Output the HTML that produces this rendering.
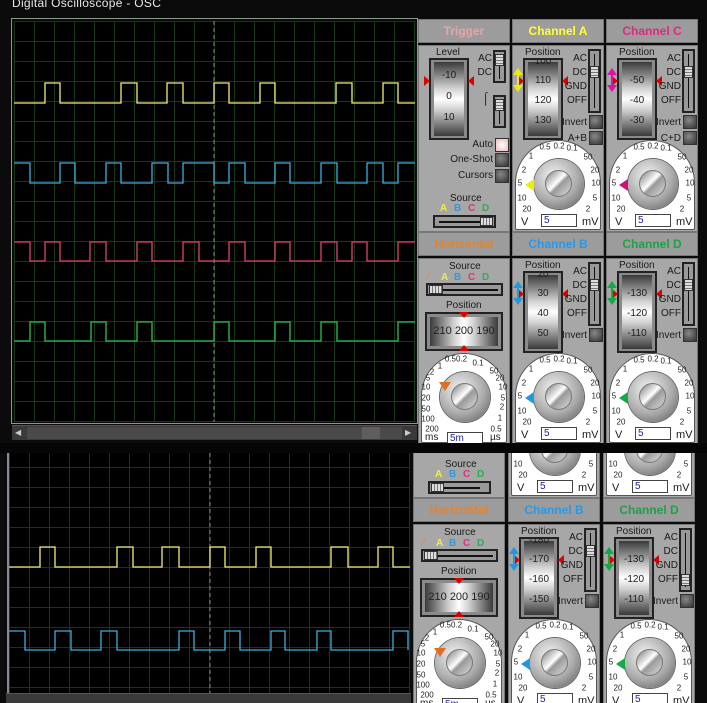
<!DOCTYPE html>
<html><head><meta charset="utf-8"><style>
*{margin:0;padding:0;box-sizing:border-box}
body{width:707px;height:703px;background:#0b0b0b;position:relative;overflow:hidden;font-family:"Liberation Sans",sans-serif;}
.abs{position:absolute}
.title{position:absolute;left:12px;top:-4px;color:#e8e8e8;font-size:12px;letter-spacing:.3px}
.scr{position:absolute;background-color:#000;
 background-image:linear-gradient(90deg,#173717 1px,transparent 1px),linear-gradient(#173717 1px,transparent 1px);
 background-size:20px 20px}
.frame{position:absolute;border:1px solid #8a9a8a}
.sb{position:absolute;background:#3a3a3a;border-top:1px solid #555}
.grp{position:absolute;overflow:hidden}
.col{position:absolute;width:92px;height:213px}
.hd{position:absolute;left:0;top:0;width:92px;height:24px;background:#9c9c9c;border:1px solid #777;text-align:center;font-weight:bold;font-size:12px;line-height:22px}
.bd{position:absolute;left:0;top:26px;width:92px;height:187px;background:#a7a7a7;border:1px solid #777}
.l{position:absolute;font-size:10px;color:#1a1a1a;white-space:nowrap;font-family:"Liberation Sans Narrow","Liberation Sans",sans-serif}
.r{left:auto!important;right:17px;text-align:right}
.drum{position:absolute;background:#8a8a8a;border:2px solid #222;overflow:hidden}
.cyl{position:absolute;left:3px;top:2px;right:3px;bottom:2px;background:linear-gradient(#3a3a3a,#cfcfcf 35%,#fff 50%,#cfcfcf 65%,#3a3a3a)}
.cylh{position:absolute;left:3px;top:3px;right:3px;bottom:3px;background:linear-gradient(90deg,#3a3a3a,#cfcfcf 35%,#fff 50%,#cfcfcf 65%,#3a3a3a)}
.dn{position:absolute;width:100%;text-align:center;font-size:10px;color:#222;font-family:"Liberation Sans Narrow","Liberation Sans",sans-serif}
.trk{position:absolute;background:#999;border:2px solid #222}
.trk i{position:absolute;background:#111}
.th{position:absolute;background:repeating-linear-gradient(#ddd 0 2px,#777 2px 3px);border:1px solid #333}
.thh{position:absolute;background:repeating-linear-gradient(90deg,#ddd 0 2px,#777 2px 3px);border:1px solid #333}
.btn{position:absolute;width:14px;height:14px;border:1px solid #333;background:radial-gradient(circle at 40% 35%,#888,#333)}
.dial{position:absolute;left:3px;top:121px;width:86px;height:90px;background:#fff;border:1px solid #555;border-radius:43px 43px 2px 2px}
.knob{position:absolute;left:22px;top:140px;width:50px;height:50px;border-radius:50%;background:radial-gradient(circle at 40% 35%,#f4f4f4,#aaa 55%,#555);box-shadow:0 0 0 1px #666}
.knob i{position:absolute;left:11px;top:11px;width:27px;height:27px;border-radius:50%;background:linear-gradient(135deg,#777,#fff 45%,#999 55%,#ddd);border:1px solid #777}
.s{position:absolute;font-size:8px;color:#222;transform:translate(-50%,-50%)}
.inp{position:absolute;left:29px;top:195px;width:36px;height:13px;background:#fff;border:1px solid #444;font-size:10px;color:#229;padding-left:2px;line-height:11px}
.ra{position:absolute;width:0;height:0;border-top:5px solid transparent;border-bottom:5px solid transparent}
.ua{position:absolute;width:0;height:0;border-left:5px solid transparent;border-right:5px solid transparent}
.dbl{position:absolute;left:1px;top:49px;width:10px;height:24px}
.src{position:absolute;font-size:10px;font-weight:bold}
</style></head><body>
<div class="title">Digital Oscilloscope - OSC</div>

<div class="frame" style="left:11px;top:18px;width:407px;height:406px"></div>
<div class="scr" style="left:14px;top:21px;width:401px;height:401px"></div>
<div class="sb" style="left:12px;top:425px;width:405px;height:15px"></div>
<div class="abs" style="left:27px;top:427px;width:375px;height:12px;background:#4a4a4a"></div>
<div class="abs" style="left:362px;top:427px;width:18px;height:12px;background:#5e5e5e"></div>
<div class="abs" style="left:15px;top:428px;color:#ccc;font-size:8px">◀</div>
<div class="abs" style="left:405px;top:428px;color:#ccc;font-size:8px">▶</div>

<div class="abs" style="left:0;top:443px;width:707px;height:10px;background:#050505"></div>

<div class="scr" style="left:8px;top:453px;width:402px;height:240px;background-position:1px 14px"></div>
<div class="abs" style="left:7px;top:453px;width:2px;height:240px;background:#889"></div>
<div class="sb" style="left:6px;top:693px;width:405px;height:10px"></div>

<svg class="abs" style="left:0;top:0" width="707" height="703">
<line x1="214" y1="21" x2="214" y2="422" stroke="#888" stroke-dasharray="4,3"/>
<line x1="210" y1="453" x2="210" y2="693" stroke="#888" stroke-dasharray="4,3"/>
<g fill="none" stroke-width="1.3">
<polyline stroke="#f4f070" points="14,103 45,103 45,83 60,83 60,103 121,103 121,83 137,83 137,103 167,103 167,83 183,83 183,103 214,103 214,83 229,83 229,103 260,103 260,83 275,83 275,103 336,103 336,83 352,83 352,103 383,103 383,83 398,83 398,103 415,103"/>
<polyline stroke="#3ab0e0" points="14,163 30,163 30,183 60,183 60,163 75,163 75,183 106,183 106,163 121,163 121,183 152,183 152,163 168,163 168,183 183,183 183,163 214,163 214,183 229,183 229,163 245,163 245,183 275,183 275,163 290,163 290,183 321,183 321,163 337,163 337,183 367,183 367,163 383,163 383,183 398,183 398,163 415,163"/>
<polyline stroke="#e04070" points="14,242 30,242 30,261 45,261 45,242 60,242 60,261 90,261 90,242 106,242 106,261 137,261 137,242 152,242 152,261 183,261 183,242 199,242 199,261 229,261 229,242 245,242 245,261 275,261 275,242 290,242 290,261 321,261 321,242 337,242 337,261 352,261 352,242 367,242 367,261 398,261 398,242 415,242"/>
<polyline stroke="#30c050" points="14,341 30,341 30,322 45,322 45,341 91,341 91,322 106,322 106,341 137,341 137,322 152,322 152,341 214,341 214,322 229,322 229,341 275,341 275,322 290,322 290,341 321,341 321,322 337,322 337,341 398,341 398,322 415,322"/>
<polyline stroke="#f4f070" points="9,567 40,567 40,547 55,547 55,567 117,567 117,547 133,547 133,567 162,567 162,547 179,547 179,567 210,567 210,547 225,547 225,567 256,567 256,547 271,547 271,567 331,567 331,547 348,547 348,567 378,567 378,547 393,547 393,567 410,567"/>
<polyline stroke="#3ab0e0" points="9,631 25,631 25,650 55,650 55,631 71,631 71,650 101,650 101,631 117,631 117,650 179,650 179,631 194,631 194,650 225,650 225,631 240,631 240,650 271,650 271,631 285,631 285,650 317,650 317,631 331,631 331,650 393,650 393,631 408,631 408,650"/>
</g></svg>

<!-- ===== TOP GROUP ===== -->
<div class="grp" style="left:418px;top:18px;width:289px;height:425px">
<div class="abs" style="left:0;top:1px;width:282px;height:430px">

<div class="col" style="left:0;top:0">
<div class="hd" style="color:#e8a4a4">Trigger</div><div class="bd"></div>
<div class="l" style="left:18px;top:28px">Level</div>
<div class="drum" style="left:11px;top:39px;width:40px;height:82px"><div class="cyl"></div>
<div class="dn" style="top:10px">-10</div><div class="dn" style="top:31px">0</div><div class="dn" style="top:52px">10</div></div>
<div class="ra" style="left:6px;top:57px;border-left:6px solid #d00"></div>
<div class="ra" style="left:50px;top:57px;border-right:6px solid #d00"></div>
<div class="l r" style="top:34px;right:18px">AC</div><div class="l r" style="top:48px;right:18px">DC</div>
<div class="trk" style="left:75px;top:31px;width:13px;height:33px"><i style="left:4px;top:3px;width:1px;height:24px"></i><div class="th" style="left:0;top:2px;width:9px;height:12px"></div></div>
<div class="l" style="left:64px;top:72px;font-size:12px">⌠</div>
<div class="trk" style="left:75px;top:76px;width:13px;height:33px"><i style="left:4px;top:3px;width:1px;height:24px"></i><div class="th" style="left:0;top:2px;width:9px;height:12px"></div></div>
<div class="l r" style="top:120px">Auto</div><div class="btn" style="left:77px;top:119px;background:radial-gradient(#fff,#f0b8b8)"></div>
<div class="l r" style="top:135px">One-Shot</div><div class="btn" style="left:77px;top:134px"></div>
<div class="l r" style="top:151px">Cursors</div><div class="btn" style="left:77px;top:150px"></div>
<div class="l" style="left:32px;top:174px">Source</div>
<div class="src" style="left:22px;top:184px;color:#ee4">A</div><div class="src" style="left:36px;top:184px;color:#39d">B</div><div class="src" style="left:50px;top:184px;color:#d37">C</div><div class="src" style="left:64px;top:184px;color:#3a5">D</div>
<div class="trk" style="left:15px;top:196px;width:63px;height:13px"><i style="left:4px;top:4px;width:46px;height:2px"></i><div class="thh" style="left:45px;top:0;width:13px;height:9px"></div></div>
</div>

<div class="col" style="left:94px;top:0">
<div class="hd" style="color:#ff3">Channel A</div><div class="bd"></div>
<div class="l" style="left:13px;top:28px">Position</div>
<div class="drum" style="left:11px;top:39px;width:40px;height:82px"><div class="cyl"></div>
<div class="dn" style="top:-4px">100</div><div class="dn" style="top:15px">110</div><div class="dn" style="top:35px">120</div><div class="dn" style="top:55px">130</div></div>
<div class="ra" style="left:6px;top:57px;border-left:6px solid #d00"></div>
<div class="ra" style="left:50px;top:57px;border-right:6px solid #d00"></div>
<div class="dbl"><div class="ua" style="top:0;border-bottom:7px solid #ee0"></div><div class="abs" style="left:4px;top:6px;width:2px;height:12px;background:#ee0"></div><div class="ua" style="top:17px;border-top:7px solid #ee0"></div></div>
<div class="l r" style="top:34px">AC</div><div class="l r" style="top:48px">DC</div><div class="l r" style="top:62px">GND</div><div class="l r" style="top:76px">OFF</div>
<div class="trk" style="left:76px;top:30px;width:13px;height:64px"><i style="left:4px;top:3px;width:1px;height:54px"></i><div class="th" style="left:0;top:15px;width:9px;height:12px"></div></div>
<div class="l r" style="top:98px">Invert</div><div class="btn" style="left:77px;top:96px"></div>
<div class="l r" style="top:114px">A+B</div><div class="btn" style="left:77px;top:112px"></div>
<div class="dial"></div>
<span class="s" style="left:33px;top:128px">0.5</span><span class="s" style="left:47px;top:127px">0.2</span><span class="s" style="left:60px;top:129px">0.1</span>
<span class="s" style="left:19px;top:137px">1</span><span class="s" style="left:12px;top:151px">2</span><span class="s" style="left:8px;top:164px">5</span><span class="s" style="left:10px;top:179px">10</span><span class="s" style="left:15px;top:190px">20</span>
<span class="s" style="left:76px;top:138px">50</span><span class="s" style="left:83px;top:151px">20</span><span class="s" style="left:84px;top:164px">10</span><span class="s" style="left:83px;top:179px">5</span><span class="s" style="left:76px;top:190px">2</span>
<div class="knob"><i></i></div>
<div class="ra" style="left:13px;top:160px;border-right:9px solid #ee0;border-top-width:6px;border-bottom-width:6px"></div>
<div class="l" style="left:9px;top:197px;font-size:11px">V</div><div class="inp">5</div><div class="l" style="left:70px;top:197px;font-size:11px">mV</div>
</div>

<div class="col" style="left:188px;top:0">
<div class="hd" style="color:#e02880">Channel C</div><div class="bd"></div>
<div class="l" style="left:13px;top:28px">Position</div>
<div class="drum" style="left:11px;top:39px;width:40px;height:82px"><div class="cyl"></div>
<div class="dn" style="top:15px">-50</div><div class="dn" style="top:35px">-40</div><div class="dn" style="top:55px">-30</div></div>
<div class="ra" style="left:6px;top:57px;border-left:6px solid #d00"></div>
<div class="ra" style="left:50px;top:57px;border-right:6px solid #d00"></div>
<div class="dbl"><div class="ua" style="top:0;border-bottom:7px solid #d1a"></div><div class="abs" style="left:4px;top:6px;width:2px;height:12px;background:#d1a"></div><div class="ua" style="top:17px;border-top:7px solid #d1a"></div></div>
<div class="l r" style="top:34px">AC</div><div class="l r" style="top:48px">DC</div><div class="l r" style="top:62px">GND</div><div class="l r" style="top:76px">OFF</div>
<div class="trk" style="left:76px;top:30px;width:13px;height:64px"><i style="left:4px;top:3px;width:1px;height:54px"></i><div class="th" style="left:0;top:15px;width:9px;height:12px"></div></div>
<div class="l r" style="top:98px">Invert</div><div class="btn" style="left:77px;top:96px"></div>
<div class="l r" style="top:114px">C+D</div><div class="btn" style="left:77px;top:112px"></div>
<div class="dial"></div>
<span class="s" style="left:33px;top:128px">0.5</span><span class="s" style="left:47px;top:127px">0.2</span><span class="s" style="left:60px;top:129px">0.1</span>
<span class="s" style="left:19px;top:137px">1</span><span class="s" style="left:12px;top:151px">2</span><span class="s" style="left:8px;top:164px">5</span><span class="s" style="left:10px;top:179px">10</span><span class="s" style="left:15px;top:190px">20</span>
<span class="s" style="left:76px;top:138px">50</span><span class="s" style="left:83px;top:151px">20</span><span class="s" style="left:84px;top:164px">10</span><span class="s" style="left:83px;top:179px">5</span><span class="s" style="left:76px;top:190px">2</span>
<div class="knob"><i></i></div>
<div class="ra" style="left:13px;top:160px;border-right:9px solid #c17;border-top-width:6px;border-bottom-width:6px"></div>
<div class="l" style="left:9px;top:197px;font-size:11px">V</div><div class="inp">5</div><div class="l" style="left:70px;top:197px;font-size:11px">mV</div>
</div>

<div class="col" style="left:0;top:213px">
<div class="hd" style="color:#e8822a">Horizontal</div><div class="bd"></div>
<div class="l" style="left:31px;top:29px">Source</div>
<div class="l" style="left:10px;top:39px;color:#d83">⁄</div>
<div class="src" style="left:23px;top:40px;color:#ee4">A</div><div class="src" style="left:36px;top:40px;color:#39d">B</div><div class="src" style="left:50px;top:40px;color:#d37">C</div><div class="src" style="left:64px;top:40px;color:#3a5">D</div>
<div class="trk" style="left:8px;top:51px;width:77px;height:13px"><i style="left:4px;top:4px;width:66px;height:2px"></i><div class="thh" style="left:1px;top:0;width:14px;height:9px"></div></div>
<div class="l" style="left:28px;top:68px">Position</div>
<div class="drum" style="left:7px;top:80px;width:78px;height:39px"><div class="cylh"></div>
<div class="dn" style="top:11px;font-size:11px">210 200 190</div></div>
<div class="ua" style="left:41px;top:80px;border-top:6px solid #d00"></div>
<div class="ua" style="left:41px;top:113px;border-bottom:6px solid #d00"></div>
<div class="dial"></div>
<span class="s" style="left:38px;top:127px">0.50.2</span><span class="s" style="left:60px;top:131px">0.1</span>
<span class="s" style="left:22px;top:134px">1</span><span class="s" style="left:14px;top:140px">2</span><span class="s" style="left:10px;top:146px">5</span><span class="s" style="left:8px;top:155px">10</span><span class="s" style="left:8px;top:166px">20</span><span class="s" style="left:8px;top:177px">50</span><span class="s" style="left:10px;top:187px">100</span><span class="s" style="left:14px;top:197px">200</span>
<span class="s" style="left:76px;top:139px">50</span><span class="s" style="left:82px;top:146px">20</span><span class="s" style="left:85px;top:155px">10</span><span class="s" style="left:85px;top:166px">5</span><span class="s" style="left:84px;top:175px">2</span><span class="s" style="left:82px;top:186px">1</span><span class="s" style="left:78px;top:197px">0.5</span>
<div class="knob"><i></i></div>
<div class="ua" style="left:21px;top:150px;border-top:9px solid #e07020;border-left-width:6px;border-right-width:6px"></div>
<div class="l" style="left:7px;top:200px">ms</div><div class="inp" style="top:200px;height:12px">5m</div><div class="l" style="left:72px;top:200px">µs</div>
</div>

<div class="col" style="left:94px;top:213px">
<div class="hd" style="color:#2a98e8">Channel B</div><div class="bd"></div>
<div class="l" style="left:13px;top:28px">Position</div>
<div class="drum" style="left:11px;top:39px;width:40px;height:82px"><div class="cyl"></div>
<div class="dn" style="top:-4px">20</div><div class="dn" style="top:15px">30</div><div class="dn" style="top:35px">40</div><div class="dn" style="top:55px">50</div></div>
<div class="ra" style="left:6px;top:57px;border-left:6px solid #d00"></div>
<div class="ra" style="left:50px;top:57px;border-right:6px solid #d00"></div>
<div class="dbl"><div class="ua" style="top:0;border-bottom:7px solid #29d"></div><div class="abs" style="left:4px;top:6px;width:2px;height:12px;background:#29d"></div><div class="ua" style="top:17px;border-top:7px solid #29d"></div></div>
<div class="l r" style="top:34px">AC</div><div class="l r" style="top:48px">DC</div><div class="l r" style="top:62px">GND</div><div class="l r" style="top:76px">OFF</div>
<div class="trk" style="left:76px;top:30px;width:13px;height:64px"><i style="left:4px;top:3px;width:1px;height:54px"></i><div class="th" style="left:0;top:15px;width:9px;height:12px"></div></div>
<div class="l r" style="top:98px">Invert</div><div class="btn" style="left:77px;top:96px"></div>
<div class="dial"></div>
<span class="s" style="left:33px;top:128px">0.5</span><span class="s" style="left:47px;top:127px">0.2</span><span class="s" style="left:60px;top:129px">0.1</span>
<span class="s" style="left:19px;top:137px">1</span><span class="s" style="left:12px;top:151px">2</span><span class="s" style="left:8px;top:164px">5</span><span class="s" style="left:10px;top:179px">10</span><span class="s" style="left:15px;top:190px">20</span>
<span class="s" style="left:76px;top:138px">50</span><span class="s" style="left:83px;top:151px">20</span><span class="s" style="left:84px;top:164px">10</span><span class="s" style="left:83px;top:179px">5</span><span class="s" style="left:76px;top:190px">2</span>
<div class="knob"><i></i></div>
<div class="ra" style="left:13px;top:160px;border-right:9px solid #29d;border-top-width:6px;border-bottom-width:6px"></div>
<div class="l" style="left:9px;top:197px;font-size:11px">V</div><div class="inp">5</div><div class="l" style="left:70px;top:197px;font-size:11px">mV</div>
</div>

<div class="col" style="left:188px;top:213px">
<div class="hd" style="color:#20a048">Channel D</div><div class="bd"></div>
<div class="l" style="left:13px;top:28px">Position</div>
<div class="drum" style="left:11px;top:39px;width:40px;height:82px"><div class="cyl"></div>
<div class="dn" style="top:15px">-130</div><div class="dn" style="top:35px">-120</div><div class="dn" style="top:55px">-110</div></div>
<div class="ra" style="left:6px;top:57px;border-left:6px solid #d00"></div>
<div class="ra" style="left:50px;top:57px;border-right:6px solid #d00"></div>
<div class="dbl"><div class="ua" style="top:0;border-bottom:7px solid #1a4"></div><div class="abs" style="left:4px;top:6px;width:2px;height:12px;background:#1a4"></div><div class="ua" style="top:17px;border-top:7px solid #1a4"></div></div>
<div class="l r" style="top:34px">AC</div><div class="l r" style="top:48px">DC</div><div class="l r" style="top:62px">GND</div><div class="l r" style="top:76px">OFF</div>
<div class="trk" style="left:76px;top:30px;width:13px;height:64px"><i style="left:4px;top:3px;width:1px;height:54px"></i><div class="th" style="left:0;top:15px;width:9px;height:12px"></div></div>
<div class="l r" style="top:98px">Invert</div><div class="btn" style="left:77px;top:96px"></div>
<div class="dial"></div>
<span class="s" style="left:33px;top:128px">0.5</span><span class="s" style="left:47px;top:127px">0.2</span><span class="s" style="left:60px;top:129px">0.1</span>
<span class="s" style="left:19px;top:137px">1</span><span class="s" style="left:12px;top:151px">2</span><span class="s" style="left:8px;top:164px">5</span><span class="s" style="left:10px;top:179px">10</span><span class="s" style="left:15px;top:190px">20</span>
<span class="s" style="left:76px;top:138px">50</span><span class="s" style="left:83px;top:151px">20</span><span class="s" style="left:84px;top:164px">10</span><span class="s" style="left:83px;top:179px">5</span><span class="s" style="left:76px;top:190px">2</span>
<div class="knob"><i></i></div>
<div class="ra" style="left:13px;top:160px;border-right:9px solid #1a4;border-top-width:6px;border-bottom-width:6px"></div>
<div class="l" style="left:9px;top:197px;font-size:11px">V</div><div class="inp">5</div><div class="l" style="left:70px;top:197px;font-size:11px">mV</div>
</div>

</div></div>

<!-- ===== BOTTOM GROUP ===== -->
<div class="grp" style="left:413px;top:453px;width:294px;height:250px">
<div class="abs" style="left:0;top:-168px;width:282px;height:430px">

<div class="col" style="left:0;top:0">
<div class="hd" style="color:#e8a4a4">Trigger</div><div class="bd"></div>
<div class="l" style="left:32px;top:174px">Source</div>
<div class="src" style="left:22px;top:184px;color:#ee4">A</div><div class="src" style="left:36px;top:184px;color:#39d">B</div><div class="src" style="left:50px;top:184px;color:#d37">C</div><div class="src" style="left:64px;top:184px;color:#3a5">D</div>
<div class="trk" style="left:15px;top:196px;width:63px;height:13px"><i style="left:4px;top:4px;width:46px;height:2px"></i><div class="thh" style="left:1px;top:0;width:13px;height:9px"></div></div>
</div>

<div class="col" style="left:95px;top:0">
<div class="bd"></div>
<div class="dial"></div>
<span class="s" style="left:10px;top:179px">10</span><span class="s" style="left:15px;top:190px">20</span><span class="s" style="left:83px;top:179px">5</span><span class="s" style="left:76px;top:190px">2</span>
<div class="knob"><i></i></div>
<div class="l" style="left:9px;top:197px;font-size:11px">V</div><div class="inp">5</div><div class="l" style="left:70px;top:197px;font-size:11px">mV</div>
</div>
<div class="col" style="left:190px;top:0">
<div class="bd"></div>
<div class="dial"></div>
<span class="s" style="left:10px;top:179px">10</span><span class="s" style="left:15px;top:190px">20</span><span class="s" style="left:83px;top:179px">5</span><span class="s" style="left:76px;top:190px">2</span>
<div class="knob"><i></i></div>
<div class="l" style="left:9px;top:197px;font-size:11px">V</div><div class="inp">5</div><div class="l" style="left:70px;top:197px;font-size:11px">mV</div>
</div>

<div class="col" style="left:0;top:213px">
<div class="hd" style="color:#e8822a">Horizontal</div><div class="bd"></div>
<div class="l" style="left:31px;top:29px">Source</div>
<div class="l" style="left:10px;top:39px;color:#d83">⁄</div>
<div class="src" style="left:23px;top:40px;color:#ee4">A</div><div class="src" style="left:36px;top:40px;color:#39d">B</div><div class="src" style="left:50px;top:40px;color:#d37">C</div><div class="src" style="left:64px;top:40px;color:#3a5">D</div>
<div class="trk" style="left:8px;top:51px;width:77px;height:13px"><i style="left:4px;top:4px;width:66px;height:2px"></i><div class="thh" style="left:1px;top:0;width:14px;height:9px"></div></div>
<div class="l" style="left:28px;top:68px">Position</div>
<div class="drum" style="left:7px;top:80px;width:78px;height:39px"><div class="cylh"></div>
<div class="dn" style="top:11px;font-size:11px">210 200 190</div></div>
<div class="ua" style="left:41px;top:80px;border-top:6px solid #d00"></div>
<div class="ua" style="left:41px;top:113px;border-bottom:6px solid #d00"></div>
<div class="dial"></div>
<span class="s" style="left:38px;top:127px">0.50.2</span><span class="s" style="left:60px;top:131px">0.1</span>
<span class="s" style="left:22px;top:134px">1</span><span class="s" style="left:14px;top:140px">2</span><span class="s" style="left:10px;top:146px">5</span><span class="s" style="left:8px;top:155px">10</span><span class="s" style="left:8px;top:166px">20</span><span class="s" style="left:8px;top:177px">50</span><span class="s" style="left:10px;top:187px">100</span><span class="s" style="left:14px;top:197px">200</span>
<span class="s" style="left:76px;top:139px">50</span><span class="s" style="left:82px;top:146px">20</span><span class="s" style="left:85px;top:155px">10</span><span class="s" style="left:85px;top:166px">5</span><span class="s" style="left:84px;top:175px">2</span><span class="s" style="left:82px;top:186px">1</span><span class="s" style="left:78px;top:197px">0.5</span>
<div class="knob"><i></i></div>
<div class="ua" style="left:21px;top:150px;border-top:9px solid #e07020;border-left-width:6px;border-right-width:6px"></div>
<div class="l" style="left:7px;top:200px">ms</div><div class="inp" style="top:200px;height:12px">5m</div><div class="l" style="left:72px;top:200px">µs</div>
</div>

<div class="col" style="left:95px;top:213px">
<div class="hd" style="color:#2a98e8">Channel B</div><div class="bd"></div>
<div class="l" style="left:13px;top:28px">Position</div>
<div class="drum" style="left:11px;top:39px;width:40px;height:82px"><div class="cyl"></div>
<div class="dn" style="top:-4px">-180</div><div class="dn" style="top:15px">-170</div><div class="dn" style="top:35px">-160</div><div class="dn" style="top:55px">-150</div></div>
<div class="ra" style="left:6px;top:57px;border-left:6px solid #d00"></div>
<div class="ra" style="left:50px;top:57px;border-right:6px solid #d00"></div>
<div class="dbl"><div class="ua" style="top:0;border-bottom:7px solid #29d"></div><div class="abs" style="left:4px;top:6px;width:2px;height:12px;background:#29d"></div><div class="ua" style="top:17px;border-top:7px solid #29d"></div></div>
<div class="l r" style="top:34px">AC</div><div class="l r" style="top:48px">DC</div><div class="l r" style="top:62px">GND</div><div class="l r" style="top:76px">OFF</div>
<div class="trk" style="left:76px;top:30px;width:13px;height:64px"><i style="left:4px;top:3px;width:1px;height:54px"></i><div class="th" style="left:0;top:15px;width:9px;height:12px"></div></div>
<div class="l r" style="top:98px">Invert</div><div class="btn" style="left:77px;top:96px"></div>
<div class="dial"></div>
<span class="s" style="left:33px;top:128px">0.5</span><span class="s" style="left:47px;top:127px">0.2</span><span class="s" style="left:60px;top:129px">0.1</span>
<span class="s" style="left:19px;top:137px">1</span><span class="s" style="left:12px;top:151px">2</span><span class="s" style="left:8px;top:164px">5</span><span class="s" style="left:10px;top:179px">10</span><span class="s" style="left:15px;top:190px">20</span>
<span class="s" style="left:76px;top:138px">50</span><span class="s" style="left:83px;top:151px">20</span><span class="s" style="left:84px;top:164px">10</span><span class="s" style="left:83px;top:179px">5</span><span class="s" style="left:76px;top:190px">2</span>
<div class="knob"><i></i></div>
<div class="ra" style="left:13px;top:160px;border-right:9px solid #29d;border-top-width:6px;border-bottom-width:6px"></div>
<div class="l" style="left:9px;top:197px;font-size:11px">V</div><div class="inp">5</div><div class="l" style="left:70px;top:197px;font-size:11px">mV</div>
</div>

<div class="col" style="left:190px;top:213px">
<div class="hd" style="color:#20a048">Channel D</div><div class="bd"></div>
<div class="l" style="left:13px;top:28px">Position</div>
<div class="drum" style="left:11px;top:39px;width:40px;height:82px"><div class="cyl"></div>
<div class="dn" style="top:15px">-130</div><div class="dn" style="top:35px">-120</div><div class="dn" style="top:55px">-110</div></div>
<div class="ra" style="left:6px;top:57px;border-left:6px solid #d00"></div>
<div class="ra" style="left:50px;top:57px;border-right:6px solid #d00"></div>
<div class="dbl"><div class="ua" style="top:0;border-bottom:7px solid #1a4"></div><div class="abs" style="left:4px;top:6px;width:2px;height:12px;background:#1a4"></div><div class="ua" style="top:17px;border-top:7px solid #1a4"></div></div>
<div class="l r" style="top:34px">AC</div><div class="l r" style="top:48px">DC</div><div class="l r" style="top:62px">GND</div><div class="l r" style="top:76px">OFF</div>
<div class="trk" style="left:76px;top:30px;width:13px;height:64px"><i style="left:4px;top:3px;width:1px;height:54px"></i><div class="th" style="left:0;top:44px;width:9px;height:12px"></div></div>
<div class="l r" style="top:98px">Invert</div><div class="btn" style="left:77px;top:96px"></div>
<div class="dial"></div>
<span class="s" style="left:33px;top:128px">0.5</span><span class="s" style="left:47px;top:127px">0.2</span><span class="s" style="left:60px;top:129px">0.1</span>
<span class="s" style="left:19px;top:137px">1</span><span class="s" style="left:12px;top:151px">2</span><span class="s" style="left:8px;top:164px">5</span><span class="s" style="left:10px;top:179px">10</span><span class="s" style="left:15px;top:190px">20</span>
<span class="s" style="left:76px;top:138px">50</span><span class="s" style="left:83px;top:151px">20</span><span class="s" style="left:84px;top:164px">10</span><span class="s" style="left:83px;top:179px">5</span><span class="s" style="left:76px;top:190px">2</span>
<div class="knob"><i></i></div>
<div class="ra" style="left:13px;top:160px;border-right:9px solid #1a4;border-top-width:6px;border-bottom-width:6px"></div>
<div class="l" style="left:9px;top:197px;font-size:11px">V</div><div class="inp">5</div><div class="l" style="left:70px;top:197px;font-size:11px">mV</div>
</div>

</div></div>
</body></html>
